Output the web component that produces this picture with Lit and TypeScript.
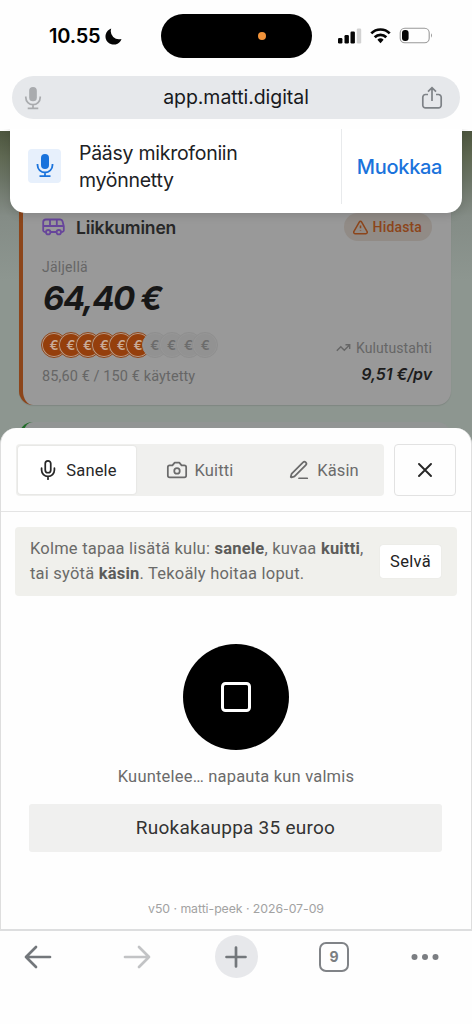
import { LitElement, html, css, svg } from "lit";
import { customElement, state } from "lit/decorators.js";
import { classMap } from "lit/directives/class-map.js";

const micIcon = html`<svg class="icon" width="22" height="22" viewBox="0 0 24 24">
  <path d="M12 2a3 3 0 0 0-3 3v7a3 3 0 0 0 6 0V5a3 3 0 0 0-3-3ZM19 10v2a7 7 0 0 1-14 0v-2M12 19v3" /></svg>`;
const cameraIcon = html`<svg class="icon" width="22" height="22" viewBox="0 0 24 24">
  <path d="M14.5 4h-5L7 7H4a2 2 0 0 0-2 2v9a2 2 0 0 0 2 2h16a2 2 0 0 0 2-2V9a2 2 0 0 0-2-2h-3l-2.500-3Z" /><circle cx="12" cy="13" r="3" /></svg>`;
const penIcon = html`<svg class="icon" width="22" height="22" viewBox="0 0 24 24">
  <path d="M12 21h9M16.376 3.622a1 1 0 0 1 3.002 3.002L7.368 18.635a2 2 0 0 1-.855.506l-2.872.838a.5.5 0 0 1-.62-.62l.838-2.872a2 2 0 0 1 .506-.854z" /></svg>`;

const solidMic = svg`<rect x="8" y="1" width="8" height="15" rx="4" fill="currentColor" />
  <path d="M4.500 11v1a7.500 7.500 0 0 0 15 0v-1M12 19.500V23M6.500 23.200h11" fill="none" stroke="currentColor" stroke-width="1.800" />`;

@customElement("status-bar")
class StatusBar extends LitElement {
  static styles = css`
    :host { display: flex; height: 76px; box-sizing: border-box; padding: 14px 39px 18px 49px; font-family: Inter, sans-serif; }
    .clock { width: 112px; display: flex; align-items: center; gap: 5px; font-size: 20px; font-weight: 600; letter-spacing: -0.2px; }
    .island { width: 151px; height: 44px; border-radius: 22px; background: #000; display: flex; align-items: center; }
    .dot { width: 8px; height: 8px; border-radius: 50%; background: #f1933a; margin-left: 97px; }
    .signals { flex: 1; display: flex; align-items: center; justify-content: flex-end; margin-top: -3px; }
  `;
  render() {
    return html`
      <div class="clock">10.55
        <svg width="17" height="17" viewBox="0 0 17 17"><path d="M6.200.6A8.200 8.200 0 1 0 16.500 10.900 8.200 8.200 0 0 1 6.200.6Z" fill="#050505" /></svg>
      </div>
      <div class="island"><div class="dot"></div></div>
      <div class="signals">
        <svg width="96" height="20" viewBox="0 0 96 20">
          <g fill="#050505">
            <rect x="1" y="13" width="4.400" height="5.500" rx="1.200" />
            <rect x="7.500" y="10" width="4.400" height="8.500" rx="1.200" />
            <rect x="13.500" y="6.500" width="4.400" height="12" rx="1.200" />
            <rect x="19.800" y="3.500" width="4.400" height="15" rx="1.200" fill="#d2d2d2" />
          </g>
          <g fill="none" stroke="#050505" stroke-width="2.700">
            <path d="M34.300 8.400a12.800 12.800 0 0 1 18.400 0" />
            <path d="M37.700 12.200a8.200 8.200 0 0 1 11.600 0" />
          </g>
          <path d="M40.400 14.800a4.500 4.500 0 0 1 6.200 0l-3.100 3.400Z" fill="#050505" />
          <rect x="63.200" y="3.200" width="29" height="14.600" rx="4.600" fill="none" stroke="#999" stroke-width="1.100" />
          <rect x="65" y="5" width="6.600" height="11" rx="3" fill="#050505" />
          <path d="M94 8.300q2 2.200 0 4.400Z" fill="#999" />
        </svg>
      </div>`;
  }
}

@customElement("address-bar")
class AddressBar extends LitElement {
  static styles = css`
    :host { display: flex; align-items: center; height: 43px; margin: 0 12px; box-sizing: border-box; padding: 0 17px 0 11px;
      border-radius: 22px; background: #e6e8eb; font-family: Inter, sans-serif; }
    .mic { color: #a9abae; }
    .host { flex: 1; text-align: center; font-size: 19.5px; color: #17191c; letter-spacing: -0.05px; padding-left: 8px; margin-top: -1px; }
  `;
  render() {
    return html`
      <svg class="mic" width="20" height="24" viewBox="3 0 18 25">${solidMic}</svg>
      <div class="host">app.matti.digital</div>
      <svg width="22" height="24" viewBox="0 0 22 24" fill="none" stroke="#7e8287" stroke-width="1.700">
        <path d="M7 8.500H4.500a2.700 2.700 0 0 0-2.700 2.700v8a2.700 2.700 0 0 0 2.700 2.700h13a2.700 2.700 0 0 0 2.700-2.700v-8a2.700 2.700 0 0 0-2.700-2.700H15M11 15V2M7 5.600l4-4 4 4" />
      </svg>`;
  }
}

@customElement("permission-banner")
class PermissionBanner extends LitElement {
  static styles = css`
    :host { display: flex; align-items: center; height: 94px; box-sizing: border-box; background: #fff; border-radius: 0 0 15px 15px;
      box-shadow: 0 3px 8px rgba(0, 0, 0, 0.12); clip-path: inset(10px -20px -20px -20px); font-family: Inter, sans-serif; padding: 10px 0 9px 18px; }
    .badge { width: 33px; height: 34px; border-radius: 4px; background: #e7f0fc; color: #1a73dc; display: grid; place-items: center; margin-top: -2px; }
    .label { flex: 1; margin-left: 18px; font-size: 19.5px; line-height: 26.500px; color: #202124; letter-spacing: -0.27px; }
    .action { width: 121px; height: 75px; box-sizing: border-box; border-left: 1px solid #e8eaec; display: grid; place-items: center;
      color: #1a73dc; font-size: 20px; font-weight: 550; padding-right: 5px; letter-spacing: -0.3px; }
  `;
  render() {
    return html`
      <div class="badge"><svg width="18" height="25" viewBox="3 0 18 25">${solidMic}</svg></div>
      <div class="label">Pääsy mikrofoniin<br />myönnetty</div>
      <div class="action">Muokkaa</div>`;
  }
}

@customElement("budget-card")
class BudgetCard extends LitElement {
  static styles = css`
    :host { display: block; height: 206px; box-sizing: border-box; border-left: 4px solid #8c451a; border-radius: 14px; background: #999;
      padding: 14px 19px 0 19px; font-family: Roboto, sans-serif; box-shadow: 0 1px 1px rgba(0, 0, 0, 0.1); }
    .head { display: flex; align-items: center; height: 28px; }
    .name { flex: 1; margin-left: 11px; font-family: Inter, sans-serif; font-size: 17.5px; font-weight: 600; letter-spacing: -0.15px; color: #272727; }
    .alert { display: flex; align-items: center; gap: 5px; height: 28px; padding: 0 10px 0 9px; box-sizing: border-box; border-radius: 14px; background: #918b86;
      color: #8c451a; font-size: 14px; font-weight: 500; letter-spacing: 0.15px; }
    .left { height: 20px; margin-top: 16px; font-size: 14px; line-height: 20px; letter-spacing: 0.25px; color: #666; }
    .sum { height: 43px; margin-top: 0; padding-left: 1px; line-height: 43px; font-family: Inter, sans-serif; font-style: italic; font-weight: 700; font-size: 33px; letter-spacing: -1.5px; color: #171717; }
    .body { display: flex; justify-content: space-between; }
    .coins { display: flex; height: 26px; margin: 12px 0 0 -1px; }
    .coin { width: 26px; height: 26px; box-sizing: border-box; margin-right: -9.200px; border-radius: 50%; border: 1px solid #8c451a; padding: 1px; background: #b99b87; }
    .face { height: 22px; border-radius: 50%; background: #953f0c; color: #c9ab97; font-family: Inter, sans-serif; font-size: 13.500px; font-weight: 600; line-height: 22px; text-align: center; }
    .empty { border-color: #8f8f8f; background: #969696; }
    .empty .face { background: #929292; color: #6c6c6c; }
    .used { margin-top: 10px; line-height: 18px; font-size: 14.500px; letter-spacing: 0.1px; color: #666; }
    .rate { display: flex; flex-direction: column; align-items: flex-end; padding-top: 18px; color: #666; }
    .rate-label { display: flex; align-items: center; gap: 5px; font-size: 14px; line-height: 20px; letter-spacing: 0.1px; }
    .pace { margin-top: 5px; font-family: Inter, sans-serif; font-size: 16px; line-height: 22px; font-weight: 600; font-style: italic; color: #1d1d1d; letter-spacing: -0.1px; }
  `;
  render() {
    return html`
      <div class="head">
        <svg width="23" height="18" viewBox="0 0 23 18" fill="none" stroke="#67459b" stroke-width="1.800" stroke-linejoin="round">
          <path d="M3.800 14H3a1.800 1.800 0 0 1-1.800-1.800V4.200A2.700 2.700 0 0 1 3.900 1.500h14.300a2.400 2.400 0 0 1 2.300 1.800l1.300 5v3.900A1.800 1.800 0 0 1 20 14h-.8M8.700 14h5.600M1.200 8h20.500M8 1.500V8M14.800 1.500V8" />
          <circle cx="6.200" cy="14.200" r="2.200" /><circle cx="16.800" cy="14.200" r="2.200" />
        </svg>
        <div class="name">Liikkuminen</div>
        <div class="alert">
          <svg width="15" height="15" viewBox="1 2 22 20" fill="none" stroke="currentColor" stroke-width="2.200" stroke-linejoin="round">
            <path d="m21.700 18-8-14a2 2 0 0 0-3.500 0l-8 14A2 2 0 0 0 4 21h16a2 2 0 0 0 1.700-3ZM12 9v4M12 16.500v.5" /></svg>
          Hidasta
        </div>
      </div>
      <div class="left">Jäljellä</div>
      <div class="sum">64,40 €</div>
      <div class="body">
        <div>
          <div class="coins">
            ${Array.from({ length: 10 }, (_, i) => html`<div class=${classMap({ coin: true, empty: i > 5 })}><div class="face">€</div></div>`)}
          </div>
          <div class="used">85,60 € / 150 € käytetty</div>
        </div>
        <div class="rate">
          <div class="rate-label">
            <svg width="15" height="10" viewBox="0 0 15 10" fill="none" stroke="currentColor" stroke-width="1.400"><path d="m.8 7.800 4-4 3.500 3.500L13.500 2M9.500 1.800h4.200V6" /></svg>
            Kulutustahti
          </div>
          <div class="pace">9,51 €/pv</div>
        </div>
      </div>`;
  }
}

@customElement("expense-sheet")
class ExpenseSheet extends LitElement {
  @state() private active = 0;
  static styles = css`
    :host { display: block; height: 503px; box-sizing: border-box; border: 1px solid #dedede; border-top: 0; border-bottom: 2px solid #dddedf;
      border-radius: 16px 16px 0 0; background: #fefefe; font-family: Roboto, sans-serif; }
    .icon { fill: none; stroke: currentColor; stroke-width: 1.900; stroke-linecap: round; stroke-linejoin: round; }
    .head { display: flex; gap: 10px; height: 84px; box-sizing: border-box; padding: 16px 15px 15px; border-bottom: 1px solid #e4e4e4; }
    .tabs { flex: 1; display: grid; grid-template-columns: 120px 127px 1fr; background: #f0f0ee; border-radius: 4px; }
    .tab { display: flex; align-items: center; justify-content: center; gap: 7px; color: #6b6b6b; font-size: 16.500px; font-weight: 450; letter-spacing: 0.15px; }
    .on { margin: 2px 0 2px 2px; background: #fff; color: #272727; border-radius: 3px; box-shadow: 0 0 2px rgba(0, 0, 0, 0.12); }
    .close { width: 62px; height: 52px; box-sizing: border-box; border: 1px solid #e2e2e2; border-radius: 4px; display: grid; place-items: center; color: #272727; }
    .tip { display: flex; align-items: center; justify-content: space-between; height: 69px; margin: 15px 14px 0; padding: 0 16px 0 15px; border-radius: 4px; background: #f0f0ec; }
    .tip-text { font-size: 16.500px; line-height: 25px; color: #6a6a68; letter-spacing: 0.21px; white-space: nowrap; margin-top: -1px; }
    .tip-text b { font-weight: 700; color: #5c5c5a; }
    .ok { width: 61px; height: 33px; background: #fff; border-radius: 3px; display: grid; place-items: center; font-size: 16.500px; font-weight: 450; color: #222; letter-spacing: 0.3px; box-shadow: 0 0 1px rgba(0, 0, 0, 0.12); }
    .record { width: 106px; height: 106px; margin: 48px auto 0; border-radius: 50%; background: #000; display: grid; place-items: center; }
    .hint { height: 24px; margin-top: 15px; text-align: center; font-size: 16.500px; line-height: 24px; color: #6b6b6b; letter-spacing: 0.2px; }
    .heard { height: 48px; margin: 15px 29px 0 28px; border-radius: 3px; background: #f0f0ef; text-align: center; line-height: 48px; font-size: 19px; color: #333; letter-spacing: 0.25px; }
    .version { margin-top: 47px; text-align: center; font-size: 12.300px; line-height: 20px; color: #a2a2a2; font-family: Inter, sans-serif; letter-spacing: -0.05px; }
  `;
  render() {
    const tabs = [{ icon: micIcon, text: "Sanele" }, { icon: cameraIcon, text: "Kuitti" }, { icon: penIcon, text: "Käsin" }];
    return html`
      <div class="head">
        <div class="tabs">
          ${tabs.map((t, i) => html`<div class=${classMap({ tab: true, on: i === this.active })} @click=${() => (this.active = i)}>${t.icon}<span>${t.text}</span></div>`)}
        </div>
        <div class="close"><svg class="icon" width="14" height="14" viewBox="0 0 14 14"><path d="m1 1 12 12M13 1 1 13" /></svg></div>
      </div>
      <div class="tip">
        <div class="tip-text">Kolme tapaa lisätä kulu: <b>sanele</b>, kuvaa <b>kuitti</b>,<br />tai syötä <b>käsin</b>. Tekoäly hoitaa loput.</div>
        <div class="ok">Selvä</div>
      </div>
      <div class="record"><svg width="32" height="32" viewBox="0 0 32 32"><rect x="2.500" y="2.500" width="27" height="27" rx="3" fill="none" stroke="#fff" stroke-width="3" /></svg></div>
      <div class="hint">Kuuntelee… napauta kun valmis</div>
      <div class="heard">Ruokakauppa 35 euroo</div>
      <div class="version">v50 · matti-peek · 2026-07-09</div>`;
  }
}

@customElement("browser-toolbar")
class BrowserToolbar extends LitElement {
  static styles = css`
    :host { display: grid; grid-template-columns: 76px 122px 76px 120px 61px; justify-content: start; height: 93px; box-sizing: border-box; padding-top: 4px; font-family: Inter, sans-serif; }
    .item { height: 43px; display: grid; place-items: center; }
    .line { fill: none; stroke: #73777b; stroke-width: 2.700; stroke-linecap: round; stroke-linejoin: round; }
    .muted { stroke: #c2c3c5; }
    .plus { width: 43px; height: 43px; border-radius: 50%; background: #e7e8eb; display: grid; place-items: center; }
    .count { width: 30px; height: 30px; box-sizing: border-box; border: 2.500px solid #808387; border-radius: 7px; display: grid; place-items: center; font-size: 14px; font-weight: 700; color: #7b7e82; }
  `;
  render() {
    return html`
      <div class="item"><svg class="line" width="28" height="24" viewBox="0 0 28 24"><path d="M26 12H2M12 2 2 12l10 10" /></svg></div>
      <div class="item"><svg class="line muted" width="28" height="24" viewBox="0 0 28 24"><path d="M2 12h24M16 2l10 10-10 10" /></svg></div>
      <div class="item"><div class="plus"><svg class="line" width="22" height="22" viewBox="0 0 22 22"><path d="M1.500 11h19M11 1.500v19" /></svg></div></div>
      <div class="item"><div class="count">9</div></div>
      <div class="item"><svg width="28" height="8" viewBox="0 0 28 8" fill="#7b7e82"><circle cx="3.500" cy="4" r="3" /><circle cx="14" cy="4" r="3" /><circle cx="24.500" cy="4" r="3" /></svg></div>`;
  }
}

@customElement("app-root")
class AppRoot extends LitElement {
  static styles = css`
    :host { display: flex; flex-direction: column; position: relative; width: 472px; height: 1024px; overflow: hidden; background: #fefefe; }
    .page { position: relative; height: 800px; margin-top: 12px; box-sizing: border-box; padding: 68px 21px 0 19px; overflow: hidden;
      background: linear-gradient(#4d563f, #5f6852 25px, #6c7567 50px, #848c86 85px, #8d9690 150px, #8d9690 100%); }
    .next { height: 120px; margin-top: 17px; border-left: 4px solid #1f6b28; border-radius: 14px; background: #929594; }
    .sheet { position: absolute; left: 0; right: 0; bottom: 0; }
    .banner { position: absolute; top: 119px; left: 10px; right: 10px; }
  `;
  render() {
    return html`
      <status-bar></status-bar>
      <address-bar></address-bar>
      <div class="page">
        <budget-card></budget-card>
        <div class="next"></div>
        <expense-sheet class="sheet"></expense-sheet>
      </div>
      <permission-banner class="banner"></permission-banner>
      <browser-toolbar></browser-toolbar>`;
  }
}
